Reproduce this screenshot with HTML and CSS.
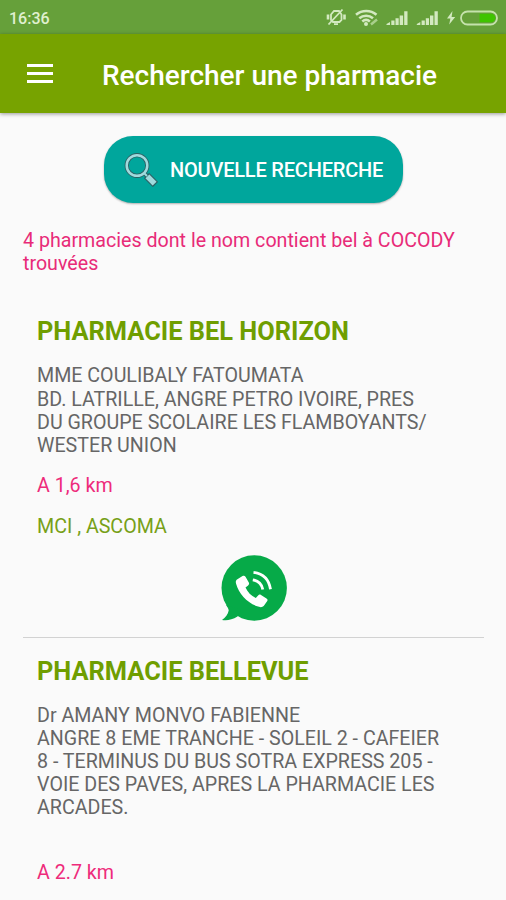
FILE: index.html
```html
<!DOCTYPE html>
<html lang="fr">
<head>
    <meta charset="UTF-8">
    <meta name="viewport" content="width=device-width, initial-scale=1.0">
    <title>Rechercher une pharmacie</title>
    <link rel="stylesheet" href="styles.css">
</head>
<body>

    <!-- Status bar -->
    <div class="status-bar">
        <span class="clock">16:36</span>
        <svg class="status-icons" viewBox="-8 0 184 24" width="184" height="24">
            <!-- Muted bell -->
            <g fill="none" stroke="#d3e9c0" stroke-width="1.8" transform="translate(-6 -1)">
                <path d="M7 15V9.500l3-3.500h5l2.500 3.500V15l-2 2H9zM10 19.200h4"/>
                <path d="M4.500 19.500L18.500 4.500"/>
                <path d="M4 9.500v5M20.500 9.500v5" stroke-width="2.600"/>
            </g>
            <!-- Wifi -->
            <g fill="none" stroke="#d3e9c0" stroke-width="2.600" transform="translate(-1 -1)">
                <path d="M27 9.800c6-5 14.500-5 20.500 0"/>
                <path d="M30.300 13.300c4-3.500 9.700-3.500 13.700 0"/>
                <path d="M33.300 16.600c2.300-2 5.300-2 7.600 0"/>
                <path d="M42 19.500l6-5" stroke-width="2.500" stroke="#a9cf8c"/>
            </g>
            <circle cx="36" cy="18" r="2" fill="#d3e9c0"/>
            <!-- Signal bars -->
            <g fill="#d3e9c0" transform="translate(0 -1)">
                <path d="M56.500 19l3.500-2v3h-3.500zM61.300 15.500h3.200V20h-3.200zM65.500 13.300h3.200V20h-3.200zM69.700 10.500h3.400V20h-3.400zM74.200 6.300h3.300V20h-3.300z"/>
                <path d="M86.800 19l3.500-2v3h-3.500zM91.600 15.500h3.200V20h-3.200zM95.800 13.300h3.200V20h-3.200zM100 10.500h3.400V20H100zM104.500 6.300h3.300V20h-3.300z"/>
                <path d="M122.500 6l-5.500 7.500h3.400l-1.200 6 6-7.500h-3.600z"/>
            </g>
            <!-- Battery -->
            <rect x="131" y="5.500" width="36" height="13" rx="6.500" fill="none" stroke="#c5e2ac" stroke-width="1.800"/>
            <path d="M149.500 7.700h11.500a4.300 4.300 0 0 1 0 8.600h-11.500z" fill="#3fc400"/>
        </svg>
    </div>

    <!-- Toolbar -->
    <header class="toolbar">
        <button class="menu-btn" aria-label="Menu">
            <span></span>
            <span></span>
            <span></span>
        </button>
        <h1>Rechercher une pharmacie</h1>
    </header>

    <main class="content">
        <button class="btn-search">
            <svg viewBox="0 0 34 34" width="34" height="34">
                <path d="M19.500 19.500l4 4" stroke="#2c6265" stroke-width="4"/>
                <path d="M22.500 22.500l9 9" stroke="#2c6265" stroke-width="7.500"/>
                <path d="M23.400 23.400l7.200 7.200" stroke="#a0dadd" stroke-width="5.500"/>
                <circle cx="13" cy="12.500" r="10.300" fill="none" stroke="#2c6265" stroke-width="4.200"/>
                <circle cx="13" cy="12.500" r="10.300" fill="none" stroke="#a0dadd" stroke-width="2.500"/>
                <path d="M20 20l3 3" stroke="#a0dadd" stroke-width="2"/>
            </svg>
            <span>NOUVELLE RECHERCHE</span>
        </button>

        <p class="result-count">4 pharmacies dont le nom contient bel à COCODY<br>trouvées</p>

        <!-- Results -->
        <section class="pharmacy">
            <h2>PHARMACIE BEL HORIZON</h2>
            <p class="address">MME COULIBALY FATOUMATA<br>BD. LATRILLE, ANGRE PETRO IVOIRE, PRES<br>DU GROUPE SCOLAIRE LES FLAMBOYANTS/<br>WESTER UNION</p>
            <p class="distance">A 1,6 km</p>
            <p class="insurance">MCI , ASCOMA</p>
            <svg class="call" viewBox="0 0 66 66" width="66" height="66">
                <circle cx="33.200" cy="33" r="32.700" fill="#06aa48"/>
                <path d="M5 50c1.500 2 2.500 3.500 2.700 5.500C7 59.500 4.500 62.500 1 65c5 1 10-.2 15.500-3.500L20 55z" fill="#06aa48"/>
                <path d="M16 24.500l5.500-3.500c1.300-.7 2.300-.4 3 .8l3.300 5.700c.6 1.200.3 2-.7 2.900l-2.600 2c2.200 4.700 5.500 8.200 10.300 10.500l2.300-2.500c.9-.9 1.800-1 2.900-.4l5.500 3.400c1.200.8 1.400 1.700.6 2.900l-3.400 4.700c-1.400 1.500-3.700 1.400-6.600.3C26 47.500 18 39 15 28.500c-.4-1.800-.2-3 1-4z" fill="#fff"/>
                <g fill="none" stroke="#fff" stroke-width="2.800">
                    <path d="M32.500 17.300c9.500 1.200 15.500 7.500 17 17"/>
                    <path d="M31.800 24.800c5.500 1 9 4.300 10 9.800"/>
                </g>
            </svg>
        </section>

        <section class="pharmacy">
            <h2>PHARMACIE BELLEVUE</h2>
            <p class="address">Dr AMANY MONVO FABIENNE<br>ANGRE 8 EME TRANCHE - SOLEIL 2 - CAFEIER<br>8 - TERMINUS DU BUS SOTRA EXPRESS 205 -<br>VOIE DES PAVES, APRES LA PHARMACIE LES<br>ARCADES.</p>
            <p class="distance distance-far">A 2.7 km</p>
        </section>
    </main>

</body>
</html>
```

FILE: styles.css
```css
/* --- General --- */
* {
    box-sizing: border-box;
}

body {
    font-family: Roboto, "Liberation Sans", sans-serif;
    background-color: #fafafa;
    width: 506px;
    height: 900px;
    margin: 0;
    overflow: hidden;
}

h1, h2, p {
    margin: 0;
}

button {
    font-family: inherit;
    border: none;
    cursor: pointer;
}

/* --- Status Bar --- */
.status-bar {
    display: flex;
    justify-content: space-between;
    align-items: center;
    height: 34px;
    padding: 2px 0 0 9px;
    background-color: #66a03a;
}

.clock {
    color: #e0f0d0;
    font-size: 16px;
    font-weight: 500;
}

/* --- Toolbar --- */
.toolbar {
    display: flex;
    align-items: center;
    height: 79px;
    padding-left: 27px;
    background-color: #77a300;
    box-shadow: 0 1px 4px rgba(0, 0, 0, 0.4);
}

.menu-btn {
    display: flex;
    flex-direction: column;
    gap: 5px;
    width: 26px;
    padding: 0;
    background: none;
}

.menu-btn span {
    height: 3px;
    background-color: #fff;
}

.toolbar h1 {
    margin-left: 49px;
    padding-top: 3px;
    color: #fff;
    font-size: 28px;
    font-weight: 500;
    white-space: nowrap;
}

/* --- Content --- */
.content {
    display: flex;
    flex-direction: column;
    padding: 23px 22px 0 23px;
}

.btn-search {
    display: flex;
    align-items: center;
    align-self: center;
    gap: 12px;
    width: 299px;
    height: 67px;
    padding: 0 0 0 20px;
    border-radius: 29px;
    background-color: #00a69c;
    box-shadow: 0 1px 2px rgba(0, 0, 0, 0.3);
    color: #fff;
    font-size: 20px;
    font-weight: 500;
    letter-spacing: -0.2px;
    white-space: nowrap;
}

.result-count {
    margin-top: 26px;
    margin-bottom: 31px;
    color: #e82b78;
    font-size: 19.65px;
    line-height: 23.2px;
    white-space: nowrap;
}

/* --- Pharmacy Items --- */
.pharmacy {
    display: flex;
    flex-direction: column;
    padding: 10px 14px 0;
    font-size: 19.65px;
    line-height: 23.2px;
    white-space: nowrap;
}

.pharmacy + .pharmacy {
    border-top: 1px solid #d2d2d2;
    padding-top: 18px;
}

.pharmacy h2 {
    color: #6f9e00;
    font-size: 25.4px;
    font-weight: 700;
    line-height: 30px;
}

.address {
    margin-top: 18px;
    color: #666;
}

.distance {
    margin-top: 17px;
    color: #ee2b7b;
}

.insurance {
    margin-top: 18px;
    color: #77a018;
}

.call {
    align-self: center;
    margin: 16px 0;
}

.distance-far {
    margin-top: 41px;
}
```
